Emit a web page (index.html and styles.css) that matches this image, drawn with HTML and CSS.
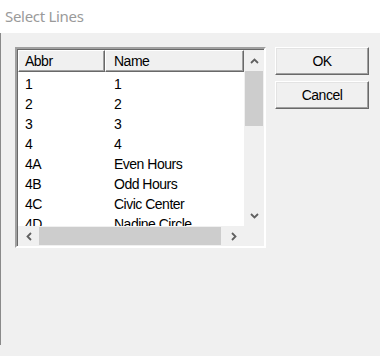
FILE: index.html
```html
<!DOCTYPE html>
<html>
<head>
  <meta charset="UTF-8">
  <title>Select Lines</title>
  <link rel="stylesheet" href="styles.css">
</head>
<body>
  <div class="titlebar">Select Lines</div>

  <div class="dialog">
    <div class="listbox">
      <div class="header">
        <div class="col abbr">Abbr</div>
        <div class="col name">Name</div>
      </div>

      <div class="rows">
        <div class="row"><span class="abbr">1</span><span class="name">1</span></div>
        <div class="row"><span class="abbr">2</span><span class="name">2</span></div>
        <div class="row"><span class="abbr">3</span><span class="name">3</span></div>
        <div class="row"><span class="abbr">4</span><span class="name">4</span></div>
        <div class="row"><span class="abbr">4A</span><span class="name">Even Hours</span></div>
        <div class="row"><span class="abbr">4B</span><span class="name">Odd Hours</span></div>
        <div class="row"><span class="abbr">4C</span><span class="name">Civic Center</span></div>
        <div class="row"><span class="abbr">4D</span><span class="name">Nadine Circle</span></div>
      </div>

      <!-- vertical scrollbar -->
      <div class="vscroll">
        <div class="arrow">
          <svg width="9" height="6" viewBox="0 0 9 6"><polyline points="1,5 4.5,1.5 8,5" fill="none" stroke="#606060" stroke-width="1.8"/></svg>
        </div>
        <div class="vtrack"><div class="vthumb"></div></div>
        <div class="arrow">
          <svg width="9" height="6" viewBox="0 0 9 6"><polyline points="1,1 4.5,4.5 8,1" fill="none" stroke="#606060" stroke-width="1.8"/></svg>
        </div>
      </div>

      <!-- horizontal scrollbar -->
      <div class="hscroll">
        <div class="arrow">
          <svg width="6" height="9" viewBox="0 0 6 9"><polyline points="5,1 1.5,4.5 5,8" fill="none" stroke="#606060" stroke-width="1.8"/></svg>
        </div>
        <div class="htrack"><div class="hthumb"></div></div>
        <div class="arrow">
          <svg width="6" height="9" viewBox="0 0 6 9"><polyline points="1,1 4.5,4.5 1,8" fill="none" stroke="#606060" stroke-width="1.8"/></svg>
        </div>
      </div>
      <div class="corner"></div>
    </div>

    <div class="buttons">
      <button class="btn">OK</button>
      <button class="btn">Cancel</button>
    </div>
  </div>
</body>
</html>
```

FILE: styles.css
```css
/* Select Lines dialog */
body {
  margin: 0;
  background: #f0f0f0;
  font-family: "Liberation Sans", Arial, sans-serif;
  font-size: 14px;
  letter-spacing: -0.5px;
  color: #000;
}

.titlebar {
  height: 33px;
  line-height: 32px;
  padding-left: 5px;
  background: #fff;
  font-family: "Noto Sans", sans-serif;
  font-size: 15px;
  letter-spacing: -0.3px;
  color: #9a9a9a;
}

.dialog {
  display: flex;
  align-items: flex-start;
  height: 312px;
  border-left: 1px solid #8a8a8a;
}

.listbox {
  display: grid;
  grid-template-columns: 226px 20px;
  grid-template-rows: 22px 154px 20px;
  margin: 14px 0 0 14px;
  border: 2px solid;
  border-color: #a0a0a0 #fff #fff #a0a0a0;
  box-shadow: inset 1px 1px #696969, inset -1px -1px #e3e3e3;
  padding: 1px 0 0 1px;
  width: 246px;
  height: 196px;
  box-sizing: content-box;
  background: #fff;
}

.header {
  display: flex;
  background: #f0f0f0;
}

.header .col {
  box-sizing: border-box;
  height: 22px;
  line-height: 20px;
  border: 1px solid;
  border-color: #fff #696969 #696969 #fff;
  box-shadow: inset -1px -1px #a0a0a0;
}

.header .abbr {
  width: 87px;
  padding-left: 6px;
}

.header .name {
  flex: 1;
  padding-left: 8px;
}

.rows {
  overflow: hidden;
  padding-top: 2px;
}

.row {
  display: flex;
  height: 20px;
  line-height: 20px;
  white-space: nowrap;
}

.row .abbr {
  width: 89px;
  padding-left: 7px;
  box-sizing: border-box;
}

.row .name {
  padding-left: 7px;
}

.vscroll {
  grid-column: 2;
  grid-row: 1 / 3;
  display: flex;
  flex-direction: column;
  background: #f0f0f0;
}

.hscroll {
  grid-column: 1;
  grid-row: 3;
  display: flex;
  background: #f0f0f0;
}

.arrow {
  display: flex;
  align-items: center;
  justify-content: center;
  flex: 0 0 21px;
}

.vtrack {
  flex: 1;
  padding: 0 1px;
}

.vthumb {
  height: 55px;
  background: #cdcdcd;
}

.htrack {
  flex: 1;
  padding: 1px 2px 1px 0;
}

.hthumb {
  height: 100%;
  background: #cdcdcd;
}

.corner {
  background: #f0f0f0;
}

.buttons {
  display: flex;
  flex-direction: column;
  gap: 6px;
  margin: 14px 0 0 9px;
}

.btn {
  width: 94px;
  height: 28px;
  padding: 0;
  background: #f0f0f0;
  border: 1px solid;
  border-color: #fff #696969 #696969 #fff;
  box-shadow: inset -1px -1px #a0a0a0, inset 1px 1px #e3e3e3;
  font-family: "Liberation Sans", Arial, sans-serif;
  font-size: 14px;
  letter-spacing: -0.5px;
  color: #000;
}
```
